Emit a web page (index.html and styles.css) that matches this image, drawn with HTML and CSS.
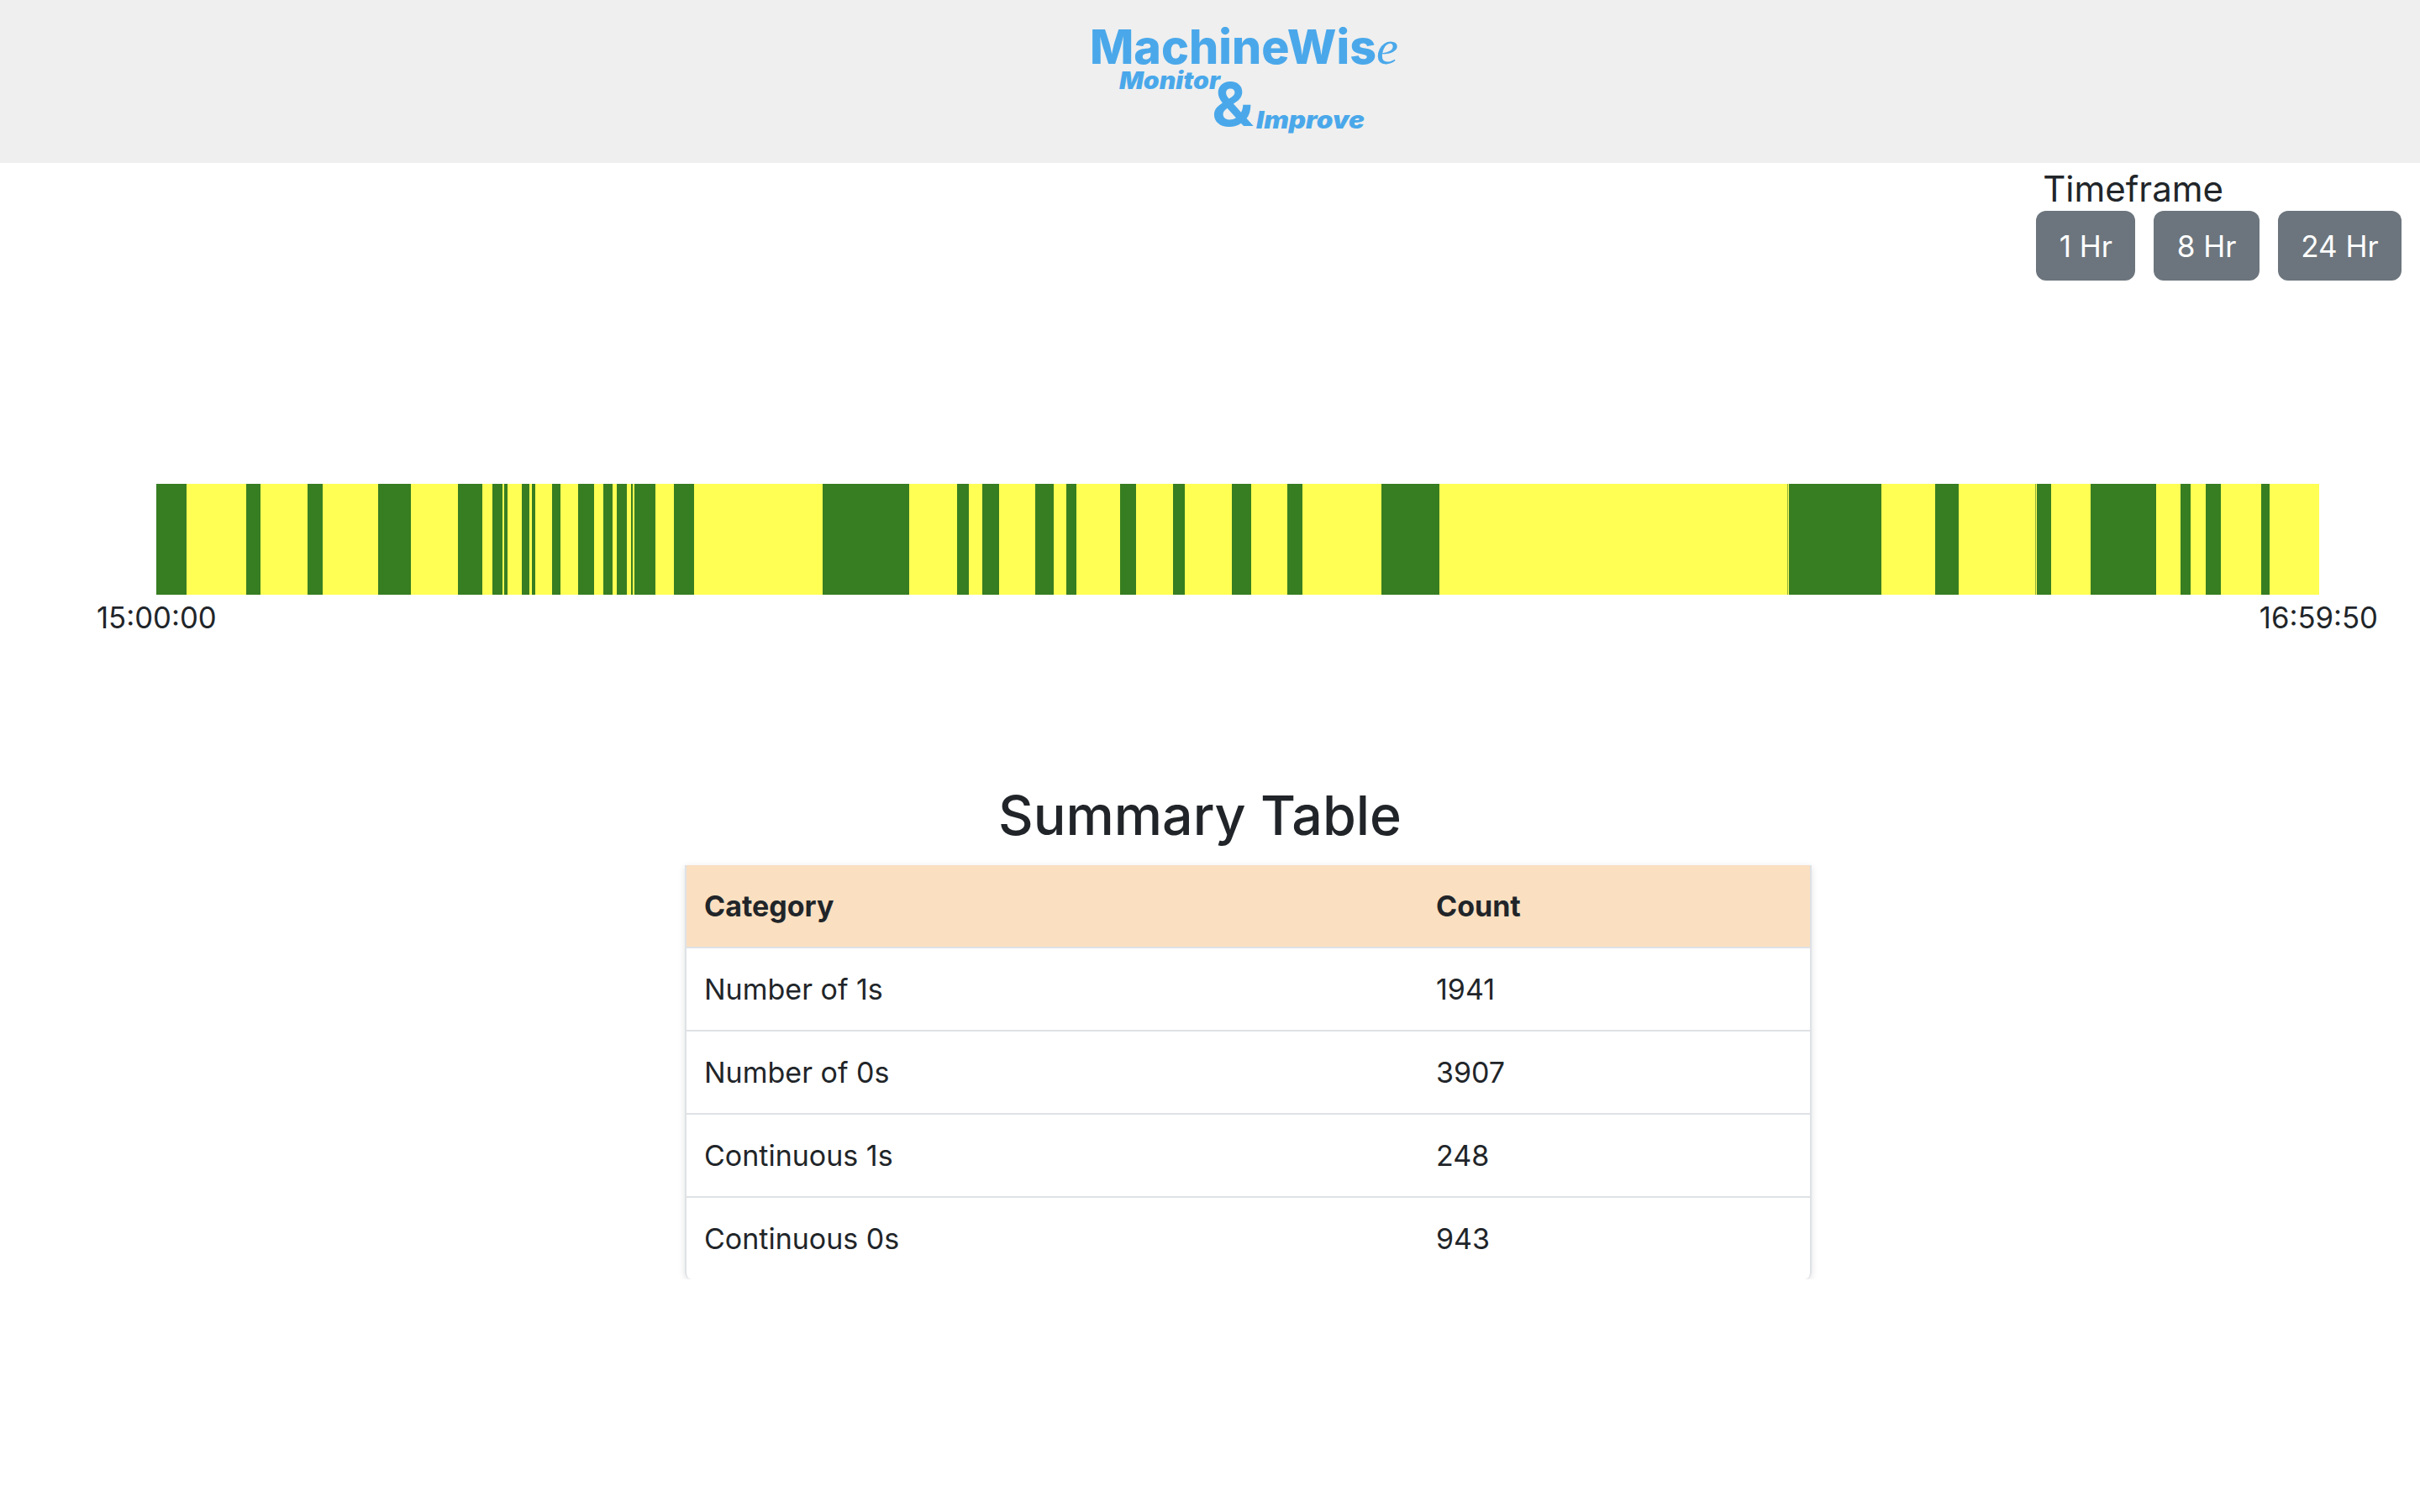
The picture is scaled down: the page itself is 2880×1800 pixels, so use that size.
FILE: index.html
```html
<!DOCTYPE html>
<html lang="en">
<head>
    <meta charset="UTF-8">
    <meta name="viewport" content="width=device-width, initial-scale=1.0">
    <title>MachineWise</title>
    <link rel="stylesheet" href="styles.css">
</head>

<body>
    <header class="top-bar">
        <svg class="logo" width="372" height="160" viewBox="0 0 372 160" role="img" aria-label="MachineWise Monitor and Improve">
            <text class="logo-main" x="0" y="56" textLength="341" lengthAdjust="spacingAndGlyphs">MachineWis</text>
            <text class="logo-e" x="341" y="56" textLength="26" lengthAdjust="spacingAndGlyphs">e</text>
            <text class="logo-sub" x="35" y="86" textLength="120" lengthAdjust="spacingAndGlyphs">Monitor</text>
            <text class="logo-amp" x="145" y="130" textLength="50" lengthAdjust="spacingAndGlyphs">&amp;</text>
            <text class="logo-sub" x="198" y="133" textLength="129" lengthAdjust="spacingAndGlyphs">Improve</text>
        </svg>
    </header>

    <section class="timeframe">
        <div class="timeframe-inner">
            <div class="timeframe-label">Timeframe</div>
            <div class="timeframe-buttons">
                <button class="btn">1 Hr</button>
                <button class="btn">8 Hr</button>
                <button class="btn">24 Hr</button>
            </div>
        </div>
    </section>

    <section class="timeline">
        <div class="bar">
            <div class="on" style="width:36px"></div><div class="off" style="width:71px"></div>
            <div class="on" style="width:17px"></div><div class="off" style="width:56px"></div>
            <div class="on" style="width:18px"></div><div class="off" style="width:66px"></div>
            <div class="on" style="width:39px"></div><div class="off" style="width:56px"></div>
            <div class="on" style="width:29px"></div><div class="off" style="width:12px"></div>
            <div class="on" style="width:12px"></div><div class="off" style="width:2px"></div>
            <div class="on" style="width:4px"></div><div class="off" style="width:17px"></div>
            <div class="on" style="width:9px"></div><div class="off" style="width:3px"></div>
            <div class="on" style="width:4px"></div><div class="off" style="width:20px"></div>
            <div class="on" style="width:10px"></div><div class="off" style="width:21px"></div>
            <div class="on" style="width:19px"></div><div class="off" style="width:11px"></div>
            <div class="on" style="width:11px"></div><div class="off" style="width:5px"></div>
            <div class="on" style="width:12px"></div><div class="off" style="width:5px"></div>
            <div class="on" style="width:2px"></div><div class="off" style="width:2px"></div>
            <div class="on" style="width:25px"></div><div class="off" style="width:22px"></div>
            <div class="on" style="width:24px"></div><div class="off" style="width:153px"></div>
            <div class="on" style="width:103px"></div><div class="off" style="width:57px"></div>
            <div class="on" style="width:14px"></div><div class="off" style="width:16px"></div>
            <div class="on" style="width:20px"></div><div class="off" style="width:43px"></div>
            <div class="on" style="width:22px"></div><div class="off" style="width:15px"></div>
            <div class="on" style="width:12px"></div><div class="off" style="width:52px"></div>
            <div class="on" style="width:19px"></div><div class="off" style="width:44px"></div>
            <div class="on" style="width:14px"></div><div class="off" style="width:56px"></div>
            <div class="on" style="width:23px"></div><div class="off" style="width:43px"></div>
            <div class="on" style="width:18px"></div><div class="off" style="width:94px"></div>
            <div class="on" style="width:69px"></div><div class="off" style="width:414px"></div>
            <div class="edge" style="width:1px"></div><div class="off" style="width:1px"></div>
            <div class="on" style="width:110px"></div><div class="off" style="width:64px"></div>
            <div class="on" style="width:28px"></div><div class="off" style="width:91px"></div>
            <div class="edge" style="width:1px"></div><div class="off" style="width:1px"></div>
            <div class="on" style="width:17px"></div><div class="off" style="width:47px"></div>
            <div class="on" style="width:78px"></div><div class="off" style="width:29px"></div>
            <div class="on" style="width:12px"></div><div class="off" style="width:18px"></div>
            <div class="on" style="width:18px"></div><div class="off" style="width:48px"></div>
            <div class="on" style="width:10px"></div><div class="off" style="width:59px"></div>
        </div>
        <div class="bar-times">
            <span>15:00:00</span>
            <span>16:59:50</span>
        </div>
    </section>

    <section class="summary">
        <h2>Summary Table</h2>
        <div class="table-wrap">
            <table>
                <thead>
                    <tr>
                        <th class="col-category">Category</th>
                        <th>Count</th>
                    </tr>
                </thead>
                <tbody>
                    <tr>
                        <td>Number of 1s</td>
                        <td>1941</td>
                    </tr>
                    <tr>
                        <td>Number of 0s</td>
                        <td>3907</td>
                    </tr>
                    <tr>
                        <td>Continuous 1s</td>
                        <td>248</td>
                    </tr>
                    <tr>
                        <td>Continuous 0s</td>
                        <td>943</td>
                    </tr>
                </tbody>
            </table>
        </div>
    </section>
</body>
</html>
```

FILE: styles.css
```css
body {
    margin: 0;
    font-family: Inter, "Liberation Sans", sans-serif;
    color: #212529;
    background-color: #fff;
}

.top-bar {
    height: 194px;
    background-color: #efefef;
    display: flex;
    justify-content: center;
    align-items: flex-start;
    padding-left: 86px;
    padding-top: 20px;
    box-sizing: border-box;
}

.logo text {
    fill: #4aa8ea;
}

.logo-main {
    font-family: Inter, sans-serif;
    font-weight: 800;
    font-size: 56px;
}

.logo-e {
    font-family: "Liberation Serif", serif;
    font-style: italic;
    font-size: 56px;
}

.logo-sub {
    font-family: Inter, sans-serif;
    font-weight: 900;
    font-style: italic;
    font-size: 28px;
}

.logo-amp {
    font-family: Inter, sans-serif;
    font-weight: 700;
    font-size: 72px;
}

.timeframe {
    display: flex;
    justify-content: flex-end;
    padding: 5px 22px 0 0;
}

.timeframe-label {
    font-size: 42px;
    line-height: 52px;
    margin-left: 8px;
}

.timeframe-buttons {
    display: flex;
    gap: 22px;
}

.btn {
    font-family: inherit;
    font-size: 35px;
    line-height: 48px;
    color: #fff;
    background-color: #6c757d;
    border: none;
    border-radius: 12px;
    padding: 18px 27.4px 17px;
}

.timeline {
    margin-top: 242px;
}

.bar {
    display: flex;
    height: 132px;
    margin-left: 186px;
}

.on {
    background-color: #377e22;
}

.off {
    background-color: #ffff54;
}

.edge {
    background-color: #8fb03a;
}

.bar-times {
    display: flex;
    justify-content: space-between;
    font-size: 34.7px;
    line-height: 48px;
    margin: 3px 50px 0 115px;
}

.summary {
    margin-top: 173px;
}

.summary h2 {
    margin: 0;
    font-size: 64.5px;
    font-weight: 500;
    line-height: 78px;
    padding-left: 1188px;
}

.table-wrap {
    width: 1341px;
    box-sizing: border-box;
    margin: 20px 0 0 815px;
    border-left: 2px solid #dee2e6;
    border-right: 2px solid #dee2e6;
    border-radius: 0 0 8px 8px;
    box-shadow: 0 2px 8px rgba(0, 0, 0, 0.12);
    overflow: hidden;
}

table {
    width: 100%;
    table-layout: fixed;
    border-collapse: collapse;
    font-size: 34px;
    line-height: 48px;
}

th,
td {
    text-align: left;
    padding: 24.5px 22px 24.5px 21px;
    border-bottom: 2px solid #dee2e6;
}

th {
    font-weight: 700;
    background-color: #fadfc0;
}

tbody tr:last-child td {
    border-bottom: none;
}

.col-category {
    width: 828px;
}
```
